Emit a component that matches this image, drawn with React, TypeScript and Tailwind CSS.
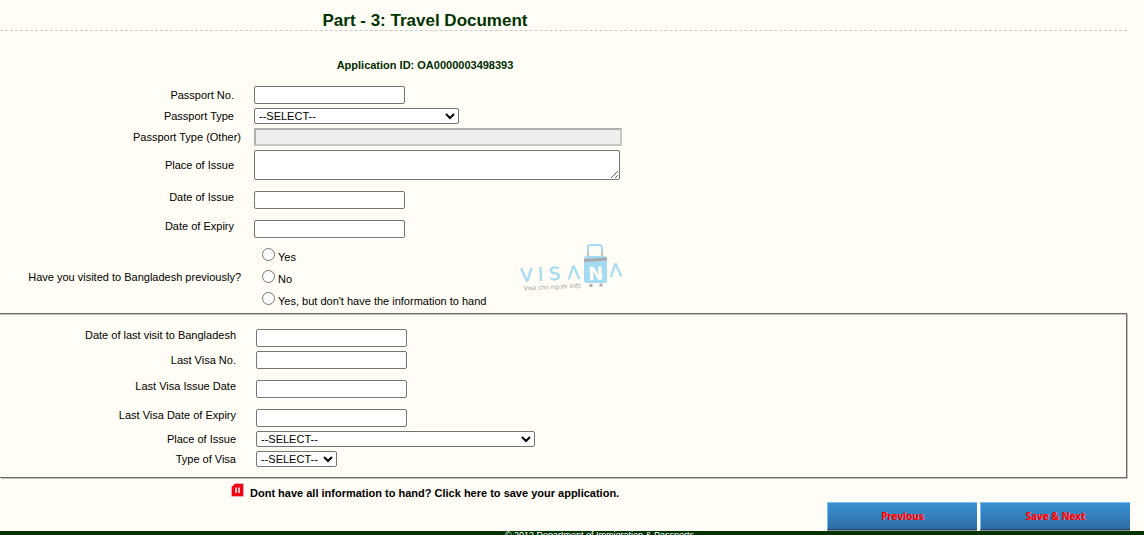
import React from 'react';

type FieldKind = 'text' | 'date' | 'select' | 'disabled' | 'textarea';

interface Field {
  id: string;
  label: string;
  kind: FieldKind;
  width?: string;
  tight?: boolean;
}

const passportFields: Field[] = [
  { id: 'passport-no', label: 'Passport No.', kind: 'text' },
  { id: 'passport-type', label: 'Passport Type', kind: 'select', width: 'w-[205px]' },
  { id: 'passport-type-other', label: 'Passport Type (Other)', kind: 'disabled', tight: true },
  { id: 'place-of-issue', label: 'Place of Issue', kind: 'textarea' },
  { id: 'date-of-issue', label: 'Date of Issue', kind: 'date' },
  { id: 'date-of-expiry', label: 'Date of Expiry', kind: 'date' }
];

const lastVisitFields: Field[] = [
  { id: 'last-visit', label: 'Date of last visit to Bangladesh', kind: 'date' },
  { id: 'last-visa-no', label: 'Last Visa No.', kind: 'text' },
  { id: 'last-visa-issue', label: 'Last Visa Issue Date', kind: 'date' },
  { id: 'last-visa-expiry', label: 'Last Visa Date of Expiry', kind: 'date' },
  { id: 'last-visa-place', label: 'Place of Issue', kind: 'select', width: 'w-[279px]' },
  { id: 'last-visa-type', label: 'Type of Visa', kind: 'select', width: 'w-[81px]' }
];

const visitedOptions = ['Yes', 'No', "Yes, but don't have the information to hand"];

const boxStyle = 'block border border-[#767676] rounded-[2px] bg-white';

function Control({ field }: { field: Field }) {
  if (field.kind === 'select') {
    return (
      <select id={field.id} className={`${boxStyle} ${field.width} h-4 my-0.5`}>
        <option>--SELECT--</option>
      </select>
    );
  }
  if (field.kind === 'disabled') {
    return (
      <input
        id={field.id}
        type="text"
        disabled
        className="block w-[368px] h-[18px] my-0.5 border-2 border-t-[#b0b0b0] border-l-[#b0b0b0] border-b-[#c8c8c8] border-r-[#c8c8c8] bg-[#eeeeee]"
      />
    );
  }
  if (field.kind === 'textarea') {
    return <textarea id={field.id} className={`${boxStyle} w-[366px] h-[30px] my-0.5 resize`} />;
  }
  return (
    <input
      id={field.id}
      type="text"
      className={`${boxStyle} w-[151px] h-[18px] mb-0.5 px-1 ${field.kind === 'date' ? 'mt-[9px]' : 'mt-0.5'}`}
    />
  );
}

function FieldRow({ field, labelWidth }: { field: Field; labelWidth: string }) {
  return (
    <div className="flex items-center">
      <label
        htmlFor={field.id}
        className={`${labelWidth} shrink-0 text-right ${field.tight ? 'pr-[13px]' : 'pr-5'}`}
      >
        {field.label}
      </label>
      <Control field={field} />
    </div>
  );
}

function VisanaLogo() {
  return (
    <svg
      width="112"
      height="56"
      viewBox="0 0 112 56"
      role="img"
      aria-label="Visana"
      className="pointer-events-none absolute left-[516px] top-0"
    >
      <path d="M72 12V7Q72 5 74 5H83Q86 5 86 8V12" fill="none" stroke="#a3dbf3" strokeWidth="2" />
      <path d="M72 12V18M86 12V18" stroke="#b0acb0" strokeWidth="1.5" />
      <rect x="68" y="16" width="23" height="27" rx="3" fill="#a3dbf3" />
      <path d="M68 20.5L91 19" stroke="#aaa7aa" strokeWidth="3" />
      <circle cx="75" cy="45.5" r="1.7" fill="#b0acb0" />
      <circle cx="85" cy="45" r="1.7" fill="#b0acb0" />
      <g
        fontFamily="'DejaVu Sans', sans-serif"
        fontSize="18"
        textAnchor="middle"
        fill="#a3dbf3"
        transform="rotate(-3 56 40)"
      >
        <g stroke="#a3dbf3" strokeWidth="0.4">
          <text x="11" y="39">V</text>
          <text x="25" y="39">I</text>
          <text x="39" y="39">S</text>
          <text x="58" y="39">Λ</text>
          <text x="100" y="39">Λ</text>
        </g>
        <text x="80" y="41" fill="#fffdf5" fontWeight="700">N</text>
        <text x="36" y="48" fontSize="6" fill="#a8a4a8">
          Visa cho người Việt
        </text>
      </g>
    </svg>
  );
}

function SaveIcon() {
  return (
    <svg width="13" height="14" viewBox="0 0 13 14" aria-hidden="true">
      <path d="M4 0.5H12.5V13.5H0.5V4Z" fill="#f70012" stroke="#d9d9e4" strokeWidth="0.5" />
      <path d="M5 4.5V10M8 4.5V10" stroke="#ffffff" strokeWidth="1.5" />
    </svg>
  );
}

function ActionButton({ children }: { children: React.ReactNode }) {
  return (
    <button
      type="button"
      className="w-[150px] h-7 border-t border-l border-b border-t-[#7cbcf0] border-l-[#7cbcf0] border-b-[#1f4466] shadow-[0_1px_0_#8e9aa6] bg-linear-to-b from-[#3892d3] to-[#2e6da4] font-['Noto_Sans',sans-serif] text-[10px] font-bold text-[#ff0000] [text-shadow:1px_0_0_#b287a8]"
    >
      {children}
    </button>
  );
}

export default function App() {
  return (
    <div className="h-screen overflow-hidden bg-[#fffdf5] font-['Liberation_Sans',Arial,sans-serif] text-[11px] leading-[14px] text-black">
      <form>
        <header className="mr-[17px] border-b border-dashed border-[#cccccc] pt-[11px]">
          <h1 className="max-w-[850px] text-center text-[17px] leading-[19px] font-bold text-[#003300]">
            Part - 3: Travel Document
          </h1>
        </header>
        <p className="max-w-[850px] pt-[27px] pb-3 text-center font-bold text-[#002b00]">
          Application ID: OA0000003498393
        </p>

        {passportFields.map((field) => (
          <FieldRow key={field.id} field={field} labelWidth="w-[254px]" />
        ))}

        <div role="radiogroup" aria-labelledby="visited-label" className="relative flex items-center">
          <span id="visited-label" className="w-[254px] shrink-0 pr-[13px] text-right">
            Have you visited to Bangladesh previously?
          </span>
          <div className="pt-1.5 pb-px pl-2">
            {visitedOptions.map((option) => (
              <label key={option} className="flex h-[22px] gap-[3px]">
                <input type="radio" name="visited" className="mt-0.5 h-[13px] w-[13px]" />
                <span className="pt-1">{option}</span>
              </label>
            ))}
          </div>
          <VisanaLogo />
        </div>

        <section className="mr-[17px] border-y border-r border-[#6b6b6b] shadow-[1px_1px_0_#c0c0c0,inset_0_1px_0_#c0c0c0] pt-1.5 pb-2">
          {lastVisitFields.map((field) => (
            <FieldRow key={field.id} field={field} labelWidth="w-[256px]" />
          ))}
        </section>

        <div className="flex pl-[231px] pt-[5px] pb-0.5">
          <a href="#save" className="flex gap-1.5 font-bold">
            <SaveIcon />
            <span className="pt-[3px]">Dont have all information to hand? Click here to save your application.</span>
          </a>
        </div>

        <div className="flex justify-end gap-[3px] pr-3.5 pb-px">
          <ActionButton>Previous</ActionButton>
          <ActionButton>Save &amp; Next</ActionButton>
        </div>
      </form>

      <footer className="bg-[#003300] pl-[55px] pb-2 text-center text-[9px] leading-[9px] text-white">
        © 2012 Department of Immigration &amp; Passports
      </footer>
    </div>
  );
}
